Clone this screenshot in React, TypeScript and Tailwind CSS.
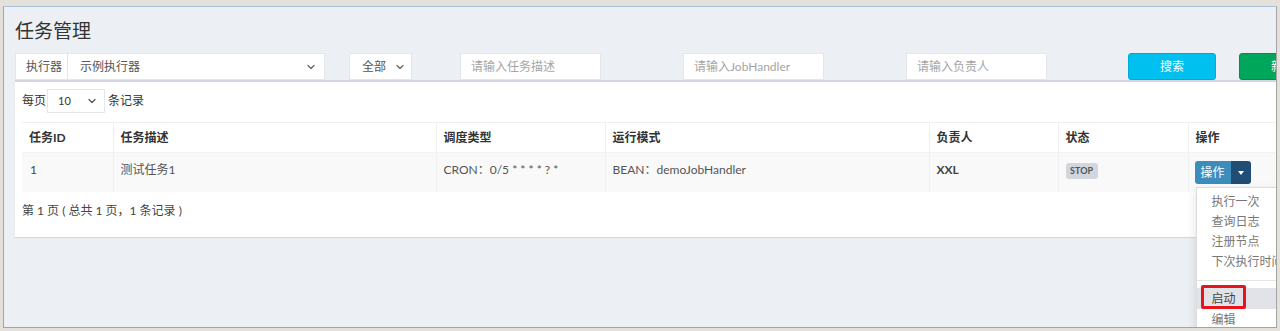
import React from 'react';
import { ChevronDown } from 'lucide-react';

// Types
interface Job {
  id: number;
  desc: string;
  schedule: string;
  mode: string;
  author: string;
  status: string;
}

const jobs: Job[] = [
  { id: 1, desc: '测试任务1', schedule: 'CRON：0/5 * * * * ? *', mode: 'BEAN：demoJobHandler', author: 'XXL', status: 'STOP' },
];

const menuTop = ['执行一次', '查询日志', '注册节点', '下次执行时间'];

// Text input used in the filter bar
const FilterInput: React.FC<{ placeholder: string; className?: string }> = ({ placeholder, className }) => (
  <div className={`h-full w-[141px] bg-white border border-[#e3e6ea] flex items-center pl-[10px] text-[12px] text-[#a5a5a5] ${className ?? ''}`}>
    {placeholder}
  </div>
);

const OpDropdown: React.FC = () => (
  <div className="relative inline-flex">
    <button className="h-[23px] w-[36px] bg-[#3c8dbc] text-white text-[12px] rounded-l-[3px] flex items-center justify-center">
      操作
    </button>
    <button className="h-[23px] w-[20px] bg-[#204d74] rounded-r-[3px] flex items-center justify-center">
      <span className="w-0 h-0 border-l-[3.5px] border-r-[3.5px] border-t-[4px] border-l-transparent border-r-transparent border-t-white" />
    </button>

    {/* Menu */}
    <div className="absolute left-[1px] top-full mt-[3px] w-[160px] bg-white border border-[#dcdcdc] shadow-[0_4px_10px_rgba(0,0,0,0.12)] pt-[4px] z-10">
      {menuTop.map((item) => (
        <div key={item} className="h-[20px] leading-[20px] pl-[15px] text-[12px] text-[#777] whitespace-nowrap">
          {item}
        </div>
      ))}
      <div className="h-px bg-[#e5e5e5] mt-[8px] mb-[7px]" />
      <div className="relative h-[21px] leading-[21px] pl-[15px] text-[12px] text-[#444] bg-[#e1e3e9]">
        启动
        <span className="absolute left-[4px] top-[-3px] w-[45px] h-[24px] border-[3px] border-[#e8141b] rounded-[2px]" />
      </div>
      <div className="h-[21px] leading-[21px] pl-[15px] text-[12px] text-[#777]">编辑</div>
      <div className="h-[21px] leading-[21px] pl-[15px] text-[12px] text-[#777]">删除</div>
    </div>
  </div>
);

const JobManage: React.FC = () => {
  return (
    <div className="w-[1280px] h-[331px] bg-[#e3e1da] pt-[6px] px-[3px] pb-[3px] overflow-hidden font-['Lato','Noto_Sans_CJK_SC',sans-serif]">
      <div className="h-full border border-[#a3a3a3] border-t-[#a9c2dc] bg-[#ecf0f5] overflow-hidden">
        <div className="pl-[11px]">
          {/* Header */}
          <h1 className="mt-[11px] mb-[11px] text-[19px] leading-[24px] text-[#333] font-['Noto_Sans_CJK_SC',sans-serif]">
            任务管理
          </h1>

          {/* Filter bar */}
          <div className="flex h-[27px] w-[1400px] text-[12px]">
            <div className="flex h-full w-[310px]">
              <div className="w-[53px] h-full bg-white border border-[#e3e6ea] flex items-center pl-[10px] text-[#555]">
                执行器
              </div>
              <div className="flex-1 h-full bg-white border border-l-0 border-[#e3e6ea] flex items-center justify-between pl-[12px] pr-[7px] text-[#555]">
                <span>示例执行器</span>
                <ChevronDown size={12} strokeWidth={2.5} className="text-[#666]" />
              </div>
            </div>
            <div className="ml-[24px] w-[63px] h-full bg-white border border-[#e3e6ea] flex items-center justify-between pl-[12px] pr-[5px] text-[#555]">
              <span>全部</span>
              <ChevronDown size={12} strokeWidth={2.5} className="text-[#666]" />
            </div>
            <FilterInput placeholder="请输入任务描述" className="ml-[48px]" />
            <FilterInput placeholder="请输入JobHandler" className="ml-[82px]" />
            <FilterInput placeholder="请输入负责人" className="ml-[82px]" />
            <button className="ml-[81px] w-[88px] h-full bg-[#00c0ef] text-white rounded-[3px] border border-[#00acd6]">搜索</button>
            <button className="ml-[23px] w-[88px] h-full bg-[#00a65a] text-white rounded-[3px] border border-[#008d4c]">新增</button>
          </div>

          {/* Box */}
          <div className="w-[1300px] bg-white border-t-2 border-[#d2d6de] shadow-[0_1px_1px_rgba(0,0,0,0.1)] pl-[7px] pt-[7px] pb-[17px] text-[12px] text-[#333]">
            <div className="flex items-center h-[24px]">
              <span>每页</span>
              <div className="ml-[1px] w-[58px] h-[24px] border border-[#e3e6ea] flex items-center justify-between pl-[10px] pr-[6px] text-[11px]">
                <span>10</span>
                <ChevronDown size={12} strokeWidth={2.5} className="text-[#555]" />
              </div>
              <span className="ml-[3px]">条记录</span>
            </div>

            <table className="mt-[9px] table-fixed border-collapse w-[1290px] text-left">
              <colgroup>
                <col className="w-[91px]" />
                <col className="w-[323px]" />
                <col className="w-[169px]" />
                <col className="w-[324px]" />
                <col className="w-[129px]" />
                <col className="w-[130px]" />
                <col />
              </colgroup>
              <thead>
                <tr className="border-t border-[#f0f0f0]">
                  {['任务ID', '任务描述', '调度类型', '运行模式', '负责人', '状态', '操作'].map((h, i) => (
                    <th
                      key={h}
                      className={`px-[7px] py-[6px] leading-[17px] font-bold text-[12px] text-[#333] border-b border-[#f2f2f2] ${i > 0 ? 'border-l border-l-[#f0f0f0]' : ''}`}
                    >
                      {h}
                    </th>
                  ))}
                </tr>
              </thead>
              <tbody>
                {jobs.map((job) => (
                  <tr key={job.id} className="bg-[#f9f9f9] align-top">
                    <td className="px-[8px] py-[8px] leading-[18px] text-[#444]">{job.id}</td>
                    <td className="px-[7px] py-[8px] leading-[18px] text-[#555] border-l border-[#f0f0f0]">{job.desc}</td>
                    <td className="px-[7px] py-[8px] leading-[18px] text-[#555] border-l border-[#f0f0f0]">{job.schedule}</td>
                    <td className="px-[7px] py-[8px] leading-[18px] text-[#555] border-l border-[#f0f0f0]">{job.mode}</td>
                    <td className="px-[7px] py-[8px] leading-[18px] text-[#444] font-bold border-l border-[#f0f0f0]">{job.author}</td>
                    <td className="px-[7px] py-[8px] leading-[18px] border-l border-[#f0f0f0]">
                      <span className="inline-flex items-center justify-center w-[32px] h-[16px] mt-[1px] rounded-[3px] bg-[#d2d6de] text-[#555] text-[9px] font-bold">
                        {job.status}
                      </span>
                    </td>
                    <td className="px-[6px] py-[8px] border-l border-[#f0f0f0]">
                      <OpDropdown />
                    </td>
                  </tr>
                ))}
              </tbody>
            </table>

            <div className="mt-[10px] leading-[18px] text-[#444]">第 1 页 ( 总共 1 页，1 条记录 )</div>
          </div>
        </div>
      </div>
    </div>
  );
};

export default JobManage;
